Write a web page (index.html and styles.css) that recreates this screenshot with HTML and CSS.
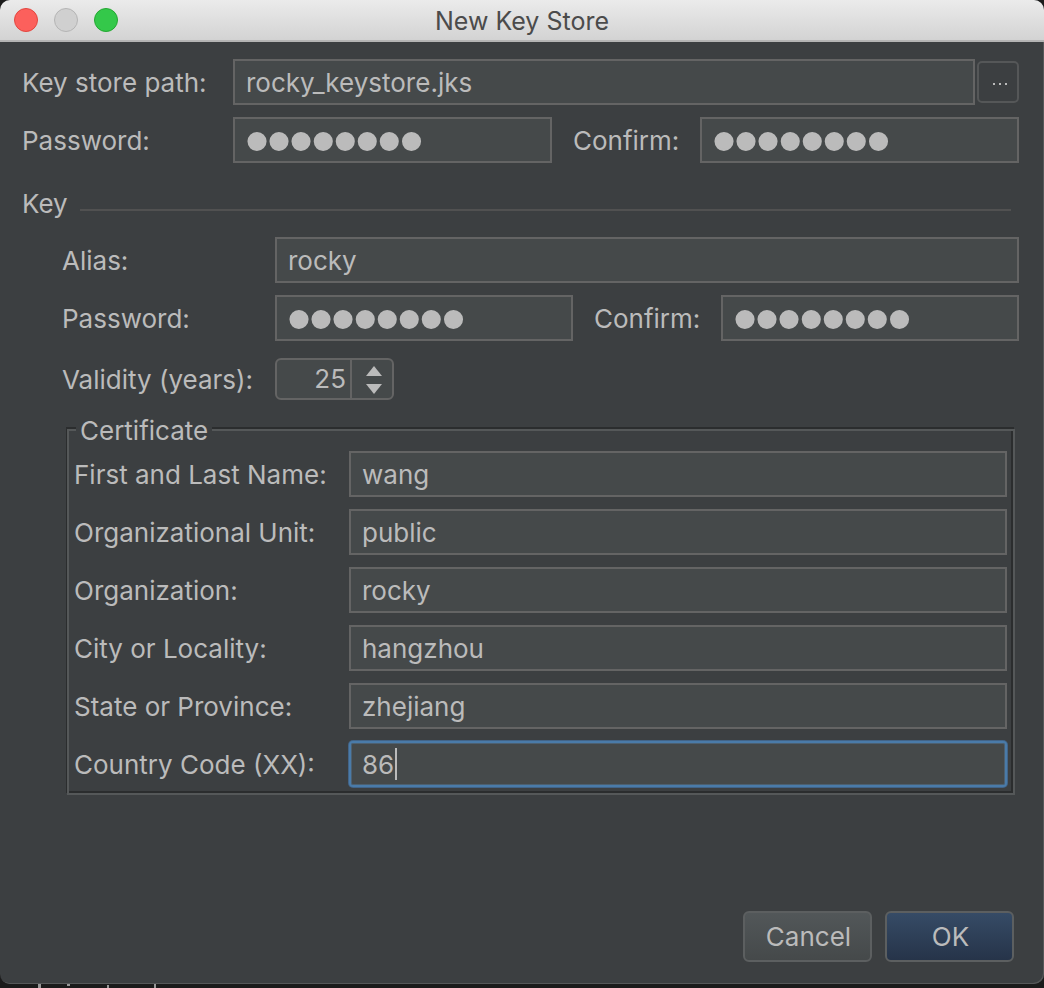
FILE: index.html
```html
<!DOCTYPE html>
<html lang="en">
<head>
<meta charset="utf-8">
<title>New Key Store</title>
<link rel="stylesheet" href="styles.css">
</head>
<body>
<div class="window">
  <header class="titlebar">
    <div class="lights">
      <button class="light light-close" type="button" aria-label="Close"></button>
      <button class="light light-minimize" type="button" aria-label="Minimize" disabled></button>
      <button class="light light-zoom" type="button" aria-label="Zoom"></button>
    </div>
    <h1 class="title">New Key Store</h1>
  </header>
  <form class="form">
    <div class="row">
      <label class="label" for="path">Key store path:</label>
      <input class="field" id="path" type="text" value="rocky_keystore.jks">
      <button class="browse" type="button" aria-label="Browse">
        <svg width="14" height="2" viewBox="0 0 14 2"><path d="M0 0h2v2H0zM6 0h2v2H6zM12 0h2v2h-2z" fill="#bbb"/></svg>
      </button>
    </div>
    <div class="row">
      <label class="label" for="store-pass">Password:</label>
      <input class="field secret" id="store-pass" type="password" value="rocky123">
      <label class="label-confirm" for="store-confirm">Confirm:</label>
      <input class="field secret" id="store-confirm" type="password" value="rocky123">
    </div>
    <div class="section-head">
      <h2 class="section-title">Key</h2>
      <hr class="section-line">
    </div>
    <section class="key">
      <div class="row">
        <label class="label" for="alias">Alias:</label>
        <input class="field" id="alias" type="text" value="rocky">
      </div>
      <div class="row">
        <label class="label" for="key-pass">Password:</label>
        <input class="field secret" id="key-pass" type="password" value="rocky123">
        <label class="label-confirm" for="key-confirm">Confirm:</label>
        <input class="field secret" id="key-confirm" type="password" value="rocky123">
      </div>
      <div class="row row-validity">
        <label class="label" for="validity">Validity (years):</label>
        <div class="spinner">
          <input class="spinner-value" id="validity" type="text" inputmode="numeric" value="25">
          <div class="spinner-steps">
            <button class="step" type="button" aria-label="Increase"><svg width="16" height="10" viewBox="0 0 16 10"><path d="M8 0l8 10H0z" fill="#bbb"/></svg></button>
            <button class="step" type="button" aria-label="Decrease"><svg width="16" height="10" viewBox="0 0 16 10"><path d="M8 10l8-10H0z" fill="#bbb"/></svg></button>
          </div>
        </div>
      </div>
    </section>
    <fieldset class="certificate">
      <legend class="legend">Certificate</legend>
      <div class="cert-rows">
        <div class="row"><label class="label" for="name">First and Last Name:</label><input class="field" id="name" type="text" value="wang"></div>
        <div class="row"><label class="label" for="unit">Organizational Unit:</label><input class="field" id="unit" type="text" value="public"></div>
        <div class="row"><label class="label" for="org">Organization:</label><input class="field" id="org" type="text" value="rocky"></div>
        <div class="row"><label class="label" for="city">City or Locality:</label><input class="field" id="city" type="text" value="hangzhou"></div>
        <div class="row"><label class="label" for="state">State or Province:</label><input class="field" id="state" type="text" value="zhejiang"></div>
        <div class="row"><label class="label" for="country">Country Code (XX):</label><div class="field-wrap"><input class="field field-active" id="country" type="text" value="86"><span class="caret"></span></div></div>
      </div>
    </fieldset>
    <footer class="actions">
      <button class="button" type="button">Cancel</button>
      <button class="button button-primary" type="submit">OK</button>
    </footer>
  </form>
</div>
<div class="behind">
  <svg width="160" height="4" viewBox="0 0 160 4"><path d="M38 0h3v4h-3zM67 0h3v2h-3zM107 1h2v3h-2zM154 0h2v4h-2z" fill="#999"/></svg>
</div>
</body>
</html>
```
FILE: styles.css
```css
* { box-sizing: border-box; }

body {
  margin: 0;
  min-height: 100vh;
  display: flex;
  flex-direction: column;
  background: #1b1b1b;
  color: #bbb;
  font: 430 26px/32px Inter, sans-serif;
}

button, input { font: inherit; color: inherit; margin: 0; padding: 0; }

.window {
  flex: 1;
  display: flex;
  flex-direction: column;
  overflow: hidden;
  background: #3c3f41;
  border-radius: 10px;
  box-shadow: inset -1px -1px 0 #565859;
}

.titlebar {
  display: grid;
  grid-template-columns: 1fr auto 1fr;
  align-items: center;
  height: 42px;
  padding: 0 14px;
  background: linear-gradient(#ebebeb, #d3d3d3);
  border-bottom: 2px solid #b4b4b4;
}

.lights { display: flex; gap: 16px; }

.light { width: 24px; height: 24px; border: 1px solid; border-radius: 50%; }
.light-close { background: #fc605c; border-color: #e2463f; }
.light-minimize { background: #d0d0d0; border-color: #b4b4b4; }
.light-zoom { background: #34c84a; border-color: #24a732; }

.title { margin: 0; padding-top: 2px; font-size: 25px; font-weight: 430; color: #4b4b4b; }

.form {
  flex: 1;
  display: flex;
  flex-direction: column;
  padding: 17px 25px 22px 22px;
}

.row { display: flex; align-items: center; }
.row + .row { margin-top: 12px; }

.label, .label-confirm { flex: none; padding-top: 2px; white-space: nowrap; }
.label { width: 211px; }
.label-confirm { width: 148px; padding-left: 21px; }

.field {
  flex: 1;
  min-width: 0;
  width: 100%;
  height: 46px;
  padding: 0 11px;
  background: #45494a;
  border: 2px solid #646464;
  border-radius: 0;
  outline: none;
}

.secret {
  font-family: "Liberation Sans", sans-serif;
  font-size: 63px;
  -webkit-text-stroke: 2px #bbb;
}

.browse {
  display: grid;
  place-items: center;
  width: 42px;
  height: 42px;
  margin-left: 2px;
  padding: 4px 0 0 4px;
  background: none;
  border: 2px solid #555758;
  border-radius: 5px;
}

.section-head {
  display: flex;
  align-items: center;
  gap: 12px;
  margin: 25px 8px 17px 0;
}
.section-title { margin: 0; font-size: 26px; font-weight: 430; }
.section-line { flex: 1; height: 2px; margin: 12px 0 0; border: 0; background: #515151; }

.key { padding-left: 40px; }
.key .label { width: 213px; }
.key .row-validity { margin-top: 17px; }

.spinner {
  display: flex;
  width: 119px;
  height: 42px;
  background: #45494a;
  border: 2px solid #646464;
  border-radius: 6px;
}
.spinner-value {
  width: 75px;
  padding-right: 4px;
  background: none;
  border: 0;
  border-right: 2px solid #646464;
  outline: none;
  text-align: right;
}
.spinner-steps {
  flex: 1;
  display: flex;
  flex-direction: column;
  align-items: center;
  justify-content: center;
  gap: 8px;
  padding: 2px 0 0 4px;
}
.step { display: block; height: 10px; border: 0; background: none; }
.step svg { display: block; }

.certificate {
  margin: 15px 4px 0 45px;
  padding: 6px 6px 6px 5px;
  border: 2px solid #555859;
  box-shadow: -1px -2px 0 #2b2d2e, inset -2px -2px 0 #2b2d2e;
}
.legend {
  height: 30px;
  margin-left: 2px;
  padding: 0 4px;
  line-height: 32px;
  background: #3c3f41;
}
.cert-rows .label { width: 275px; }

.field-wrap { position: relative; flex: 1; display: flex; }
.field-active {
  border-color: #4a7ba9;
  border-radius: 4px;
  box-shadow: 0 0 0 1px #426488, inset 0 0 0 1px #4d6070;
}
.caret {
  position: absolute;
  left: 46px;
  top: 7px;
  width: 2px;
  height: 32px;
  background: #bbb;
}

.actions {
  display: flex;
  justify-content: flex-end;
  gap: 13px;
  margin: auto 5px 0 0;
}
.button {
  width: 129px;
  height: 51px;
  padding-left: 2px;
  background: linear-gradient(#525759, #45494a);
  border: 2px solid #5c5f60;
  border-radius: 6px;
}
.button-primary { background: linear-gradient(#364b66, #263449); }

.behind { height: 4px; overflow: hidden; }
.behind svg { display: block; }
```
